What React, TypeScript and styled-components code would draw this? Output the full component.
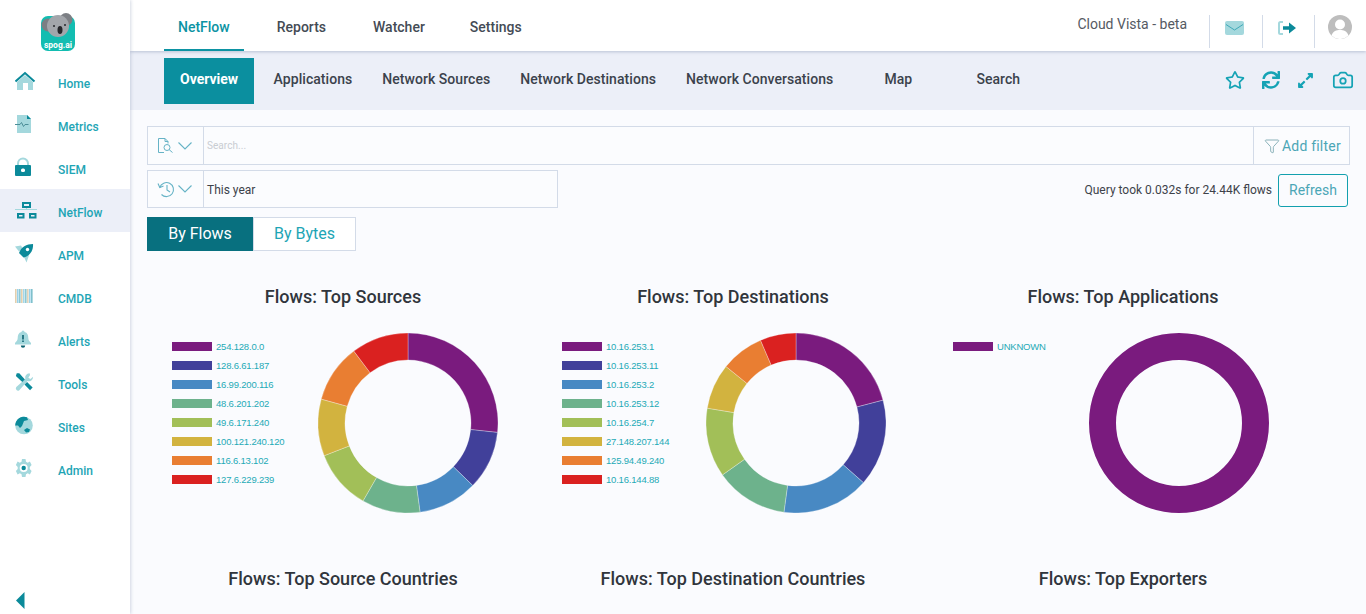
import { type FC, type ReactNode } from "react";
import styled, { createGlobalStyle } from "styled-components";
import { FaExpandAlt, FaRegStar, FaSync } from "react-icons/fa";
import { Camera, Funnel } from "lucide-react";

const DARK = "#0b8a9a";
const LIGHT = "#a4d8dd";
const TEAL_TEXT = "#1ea5b5";
const LINE = "#d3dbe8";
const COLORS = ["#7a1b7e", "#41409a", "#4889c3", "#6db28c", "#a2bf58", "#d2b33f", "#e97e32", "#da2120"];

const GlobalStyle = createGlobalStyle`
  html, body { margin: 0; height: 100%; overflow: hidden; }
  body { font-family: Roboto, "Liberation Sans", sans-serif; background: #fafbfe; }
  #root { height: 100%; }
`;

const Shell = styled.div`
  display: flex;
  height: 614px;
  overflow: hidden;
`;

const Sidebar = styled.aside`
  width: 130px;
  flex: none;
  background: #fff;
  box-shadow: 1px 0 3px rgba(120, 135, 170, 0.3);
  display: flex;
  flex-direction: column;
  position: relative;
  z-index: 3;
`;

const LogoBox = styled.div`
  height: 60px;
  padding: 12px 0 0 40px;
  box-sizing: border-box;
`;

const SideItem = styled.a<{ $active?: boolean }>`
  height: 43px;
  display: flex;
  padding-left: 15px;
  background: ${({ $active }) => ($active ? "#eceff8" : "transparent")};
`;

const SideIcon = styled.span`
  width: 22px;
  height: 22px;
  margin-top: 11px;
  margin-right: 21px;
  flex: none;
`;

const SideLabel = styled.span`
  font-size: 12px;
  font-weight: 500;
  color: ${TEAL_TEXT};
  margin-top: 17px;
  line-height: 14px;
`;

const Collapse = styled.div`
  margin-top: auto;
  padding: 0 0 5px 16px;
  height: 17px;
`;

const Main = styled.main`
  flex: 1;
  min-width: 0;
  display: flex;
  flex-direction: column;
`;

const TopBar = styled.header`
  height: 51px;
  flex: none;
  background: #fff;
  display: flex;
  padding-left: 34px;
  box-shadow: 0 1px 3px rgba(110, 125, 160, 0.4);
  position: relative;
  z-index: 2;
`;

const TopTab = styled.a<{ $active?: boolean }>`
  height: 51px;
  box-sizing: border-box;
  padding: 19px 14px 0;
  margin-right: 19px;
  font-size: 14px;
  line-height: 16px;
  font-weight: 500;
  color: ${({ $active }) => ($active ? "#0c93a3" : "#444b55")};
  border-bottom: 2px solid ${({ $active }) => ($active ? "#0c93a3" : "transparent")};

  &:nth-child(3) {
    margin-right: 17px;
  }
`;

const TopRight = styled.div`
  margin-left: auto;
  display: flex;
  align-items: flex-start;
`;

const Beta = styled.span`
  font-size: 14px;
  line-height: 16px;
  color: #555a63;
  margin: 16px 22px 0 0;
`;

const TopCell = styled.div<{ $width: number; $left: number; $top: number }>`
  width: ${({ $width }) => $width}px;
  height: 33px;
  margin-top: 15px;
  box-sizing: border-box;
  border-left: 1px solid ${LINE};
  padding: ${({ $top, $left }) => `${$top}px 0 0 ${$left}px`};
`;

const SubBar = styled.nav`
  height: 59px;
  flex: none;
  background: #eceff8;
  display: flex;
  padding: 7px 13px 0 34px;
  box-sizing: border-box;
`;

const SubTab = styled.a<{ $active?: boolean; $wide?: boolean }>`
  height: 46px;
  box-sizing: border-box;
  padding: 13px ${({ $active }) => ($active ? 16 : 15)}px 0;
  margin-right: ${({ $active }) => ($active ? 4.5 : 0)}px;
  min-width: ${({ $wide }) => ($wide ? 100 : 0)}px;
  text-align: center;
  font-size: 14px;
  line-height: 16px;
  letter-spacing: ${({ $active }) => ($active ? 0 : 0.05)}px;
  font-weight: ${({ $active }) => ($active ? 700 : 500)};
  color: ${({ $active }) => ($active ? "#fff" : "#3b424c")};
  background: ${({ $active }) => ($active ? "#0b8f9f" : "transparent")};
`;

const SubActions = styled.div`
  margin-left: auto;
  display: flex;
  gap: 17px;
  height: 20px;
  margin-top: 12px;
  color: #15a3b5;
  align-items: center;
`;

const CameraIcon = styled(Camera)`
  margin: 0 -1px 0 1px;
`;

const Content = styled.section`
  flex: 1;
  min-height: 0;
  padding: 16px 16px 0 17px;
  background: #fafbfe;
`;

const FilterRow = styled.div<{ $width?: number; $height: number }>`
  width: ${({ $width }) => ($width ? `${$width}px` : "100%")};
  height: ${({ $height }) => $height}px;
  box-sizing: border-box;
  border: 1px solid ${LINE};
  display: flex;
  align-items: center;
  background: #fbfcfe;
`;

const PickerCell = styled.div`
  width: 56px;
  height: 100%;
  flex: none;
  box-sizing: border-box;
  border-right: 1px solid ${LINE};
  display: flex;
  align-items: center;
  padding-left: 9px;
  gap: 3px;
  color: #66b3c6;
`;

const Placeholder = styled.span`
  font-size: 10px;
  letter-spacing: 0.05px;
  color: #c9ccd2;
  padding-left: 3px;
`;

const RangeText = styled.span`
  font-size: 12px;
  color: #3d424a;
  padding: 1px 0 0 3px;
`;

const AddFilter = styled.div`
  margin-left: auto;
  width: 96px;
  height: 100%;
  box-sizing: border-box;
  border-left: 1px solid ${LINE};
  display: flex;
  align-items: center;
  padding-left: 10px;
  gap: 2px;
  font-size: 14px;
  letter-spacing: 0.2px;
  color: #4ba6b6;
`;

const QueryRow = styled.div`
  display: flex;
  align-items: center;
  margin-top: 5px;
`;

const QueryInfo = styled.div`
  margin-left: auto;
  display: flex;
  align-items: center;
  gap: 6px;
  padding: 2px 2px 0 0;
  font-size: 12px;
  color: #3d424a;
`;

const RefreshButton = styled.button`
  width: 70px;
  height: 33px;
  border: 1px solid #13a0ae;
  border-radius: 3px;
  background: transparent;
  font: 400 14px Roboto, sans-serif;
  color: #4ba6b6;
  padding: 0;
`;

const Toggle = styled.div`
  display: flex;
  margin-top: 9px;
`;

const ToggleButton = styled.div<{ $active?: boolean }>`
  width: ${({ $active }) => ($active ? 106 : 103)}px;
  height: 34px;
  box-sizing: border-box;
  display: flex;
  align-items: center;
  justify-content: center;
  padding-bottom: 2px;
  font-size: 16px;
  color: ${({ $active }) => ($active ? "#fff" : "#1ea5b5")};
  background: ${({ $active }) => ($active ? "#08707f" : "#fff")};
  border: 1px solid ${({ $active }) => ($active ? "#08707f" : LINE)};
`;

const ChartGrid = styled.div`
  display: grid;
  grid-template-columns: repeat(3, 390px);
  margin-top: 35px;
  margin-left: 1px;
`;

const ChartCell = styled.div`
  display: flex;
  flex-direction: column;
`;

const ChartTitle = styled.h3`
  margin: 0;
  font-size: 18px;
  line-height: 21px;
  font-weight: 500;
  color: #30353c;
  text-align: center;
`;

const ChartBody = styled.div<{ $inset: number }>`
  display: flex;
  height: 180px;
  margin-top: 26px;
  padding: 0 6px 0 ${({ $inset }) => $inset}px;
  margin-bottom: 55px;
`;

const Legend = styled.ul`
  list-style: none;
  margin: 8px 0 0;
  padding: 0;
  display: flex;
  flex-direction: column;
  gap: 8px;
`;

const LegendRow = styled.li`
  display: flex;
  align-items: center;
  height: 11px;
  gap: 4px;
  font-family: "Liberation Sans", Arial, sans-serif;
  font-size: 9.5px;
  letter-spacing: -0.2px;
  color: #1eaab6;
`;

const Swatch = styled.i<{ $color: string }>`
  width: 40px;
  height: 9px;
  background: ${({ $color }) => $color};
`;

const DonutBox = styled.div`
  flex: 1;
  display: flex;
  justify-content: center;
`;

const Donut: FC<{ stops: number[] }> = ({ stops }) => {
  const point = (deg: number, r: number) => {
    const a = (deg * Math.PI) / 180;
    return `${(90 + r * Math.sin(a)).toFixed(2)} ${(90 - r * Math.cos(a)).toFixed(2)}`;
  };
  return (
    <svg width="180" height="180" viewBox="0 0 180 180">
      {stops.length === 1 ? (
        <circle cx="90" cy="90" r="76.5" fill="none" stroke={COLORS[0]} strokeWidth="27" />
      ) : (
        stops.map((end, i) => {
          const start = i === 0 ? 0 : stops[i - 1];
          const large = end - start > 180 ? 1 : 0;
          const d = `M${point(start, 90)} A90 90 0 ${large} 1 ${point(end, 90)} L${point(end, 63)} A63 63 0 ${large} 0 ${point(start, 63)}Z`;
          return <path key={end} d={d} fill={COLORS[i]} stroke="#fafbfe" strokeWidth="0.3" />;
        })
      )}
    </svg>
  );
};

const Glyph: FC<{ children: ReactNode }> = ({ children }) => (
  <svg width="22" height="22" viewBox="0 0 22 22">
    {children}
  </svg>
);

const Chevron = () => (
  <svg width="14" height="8" viewBox="0 0 14 8" fill="none" stroke="currentColor" strokeWidth="1.100">
    <path d="M0.500 0.500 7 7 13.500 0.500" />
  </svg>
);

const CMDB_STRIPES = ["#e2cfae", "#9ad2ea", "#8fc7d0", "#e2cfae", "#a4d8ea", "#8fc7d0", "#e2d3b8", "#9ad2ea", "#7fc0cc"];

const icons: Record<string, ReactNode> = {
  Home: (
    <Glyph>
      <path d="M2 11 10 4l8 7v8h-5v-7H8v7H2z" fill={LIGHT} />
      <path d="M0.500 10.500 10 2l9.500 8.500" fill="none" stroke={DARK} strokeWidth="2" />
    </Glyph>
  ),
  Metrics: (
    <Glyph>
      <path d="M2 1h10l4 4v14H2z" fill={LIGHT} />
      <path d="M12 1l4 4h-4z" fill={DARK} />
      <path d="M0 10.500h5l1.500-2 2 4 1.500-2h3.500" fill="none" stroke="#4b8e98" strokeWidth="1" />
    </Glyph>
  ),
  SIEM: (
    <Glyph>
      <path d="M3 9V6.500a5 5 0 0 1 10 0V9" fill="none" stroke={LIGHT} strokeWidth="2" />
      <path d="M1 8h14a1 1 0 0 1 1 1v9a1 1 0 0 1-1 1H1a1 1 0 0 1-1-1V9a1 1 0 0 1 1-1z" fill={DARK} />
      <rect x="6" y="11.500" width="4" height="3.500" rx="1.500" fill="#fff" />
    </Glyph>
  ),
  NetFlow: (
    <Glyph>
      <path d="M0 9.500h22M11.500 8v2" stroke={LIGHT} strokeWidth="1.200" />
      <path d="M8 3h7v4H8zM3 14h5.500v3.500H3zM15 14h5.500v3.500H15z" fill="none" stroke={DARK} strokeWidth="2" />
    </Glyph>
  ),
  APM: (
    <Glyph>
      <path d="M0 3.500 6 2.500 7.500 5 4 8.500zM9 14l3-3 2 1.500L11.500 19.500z" fill={LIGHT} />
      <path d="M4 10C6 4 11.500 1 18 1c.5 6-3 12-9.500 13.500z" fill={DARK} />
      <circle cx="12.500" cy="6.500" r="1.700" fill="#fff" />
    </Glyph>
  ),
  CMDB: (
    <Glyph>
      {CMDB_STRIPES.map((color, i) => (
        <rect key={i} x={i * 2} y="3" width="1.600" height="14" fill={color} />
      ))}
    </Glyph>
  ),
  Alerts: (
    <Glyph>
      <path d="M6.500 3a1.500 1.500 0 0 1 3 0c3 .8 3.800 3 3.800 6 0 2 1.200 3.500 2.700 5v1.500H0V14c1.500-1.500 2.700-3 2.700-5 0-3 .8-5.200 3.800-6z" fill={LIGHT} />
      <path d="M7.200 6h1.600v4.500H7.200zM7.200 11.500h1.600v1.500H7.200zM5.800 16.500h4.400A2.200 2.200 0 0 1 5.800 16.500z" fill="#0a6270" />
    </Glyph>
  ),
  Tools: (
    <Glyph>
      <g transform="translate(0 0.500) scale(0.86)">
        <path d="M14 11 20.500 17.500 17.500 20.500 11 14z" fill={DARK} />
        <path d="M17 1a5 5 0 0 0-5 6.500L1.500 17a2.500 2.500 0 0 0 3.500 3.500L14.500 10a5 5 0 0 0 6.500-5l-3 2.500L15.500 6 17.500 3z" fill={LIGHT} />
        <path d="M2 1 5 1 11.500 8 8.500 11 1 4z" fill={DARK} />
      </g>
    </Glyph>
  ),
  Sites: (
    <Glyph>
      <circle cx="9" cy="10.500" r="8.800" fill={LIGHT} />
      <path d="M0.200 10.500A8.800 8.800 0 0 1 12 2.200l1 2.800-4 1-2 5-2 2-2-2.500z" fill={DARK} />
      <path d="M9 15l3-2 3 1.500-1 2.500-3 .5z" fill={DARK} />
    </Glyph>
  ),
  Admin: (
    <Glyph>
      <g transform="translate(0.500 1)">
        <path d="M6.500 0h3.500l.5 2.300 1.700.8 2.200-1 1.700 3-1.800 1.500v1.800l1.800 1.500-1.700 3-2.200-1-1.700.8L10 15H6.500L6 12.700l-1.700-.8-2.200 1-1.700-3L2.200 8.400V6.600L.400 5.100l1.700-3 2.200 1L6 2.300z" fill={LIGHT} transform="scale(1 1.200)" />
        <circle cx="8.200" cy="9" r="4" fill="#fff" />
        <circle cx="8.200" cy="9" r="2.200" fill={DARK} />
      </g>
    </Glyph>
  ),
};

const KoalaLogo = () => (
  <svg width="36" height="40" viewBox="0 0 36 40">
    <rect x="1" y="4" width="34" height="35" rx="7" fill="#13bdb1" />
    <circle cx="8" cy="13" r="6.500" fill="#7c7f84" />
    <circle cx="26" cy="7.500" r="6.500" fill="#7c7f84" />
    <ellipse cx="18" cy="14" rx="11" ry="11" fill="#a3a6ab" />
    <ellipse cx="20" cy="18" rx="2.500" ry="4" fill="#26272b" />
    <circle cx="14" cy="14" r="1" fill="#26272b" />
    <circle cx="25" cy="13" r="1" fill="#26272b" />
    <text x="18" y="36" textAnchor="middle" fontFamily="Roboto, sans-serif" fontSize="8.500" fontWeight="700" fill="#fff">
      spog.ai
    </text>
  </svg>
);

const SIDE_ITEMS = ["Home", "Metrics", "SIEM", "NetFlow", "APM", "CMDB", "Alerts", "Tools", "Sites", "Admin"];
const SUB_TABS = ["Applications", "Network Sources", "Network Destinations", "Network Conversations"];

const TOP_ROW = [
  {
    title: "Flows: Top Sources",
    inset: 24,
    stops: [96, 134, 172.3, 210, 248.7, 285.4, 323, 360],
    legend: ["254.128.0.0", "128.6.61.187", "16.99.200.116", "48.6.201.202", "49.6.171.240", "100.121.240.120", "116.6.13.102", "127.6.229.239"],
  },
  {
    title: "Flows: Top Destinations",
    inset: 24,
    stops: [75.3, 131.5, 187.7, 234.8, 279.5, 308.9, 336.8, 360],
    legend: ["10.16.253.1", "10.16.253.11", "10.16.253.2", "10.16.253.12", "10.16.254.7", "27.148.207.144", "125.94.49.240", "10.16.144.88"],
  },
  { title: "Flows: Top Applications", inset: 25, stops: [360], legend: ["UNKNOWN"] },
];

const BOTTOM_ROW = ["Flows: Top Source Countries", "Flows: Top Destination Countries", "Flows: Top Exporters"];

export default function App() {
  return (
    <Shell>
      <GlobalStyle />
      <Sidebar>
        <LogoBox>
          <KoalaLogo />
        </LogoBox>
        {SIDE_ITEMS.map((name) => (
          <SideItem key={name} $active={name === "NetFlow"}>
            <SideIcon>{icons[name]}</SideIcon>
            <SideLabel>{name}</SideLabel>
          </SideItem>
        ))}
        <Collapse>
          <svg width="9" height="17" viewBox="0 0 9 17">
            <path d="M8.500 0v17L0 8.500z" fill={DARK} />
          </svg>
        </Collapse>
      </Sidebar>
      <Main>
        <TopBar>
          <TopTab $active>NetFlow</TopTab>
          <TopTab>Reports</TopTab>
          <TopTab>Watcher</TopTab>
          <TopTab>Settings</TopTab>
          <TopRight>
            <Beta>Cloud Vista - beta</Beta>
            <TopCell $width={53} $left={15} $top={5}>
              <svg width="19" height="14" viewBox="0 0 19 14">
                <rect width="19" height="14" rx="2" fill={LIGHT} />
                <path d="M1 3.500 9.500 9 18 3.500" fill="none" stroke="#3fa9b8" strokeWidth="1" />
              </svg>
            </TopCell>
            <TopCell $width={52} $left={15} $top={5}>
              <svg width="18" height="14" viewBox="0 0 18 14">
                <path d="M5 1H2.500A1.500 1.500 0 0 0 1 2.500v9A1.500 1.500 0 0 0 2.500 13H5" fill="none" stroke={LIGHT} strokeWidth="2" />
                <path d="M5 5.200h6V1.500L18 7l-7 5.500V8.800H5z" fill={DARK} />
              </svg>
            </TopCell>
            <TopCell $width={52} $left={13} $top={0}>
              <svg width="24" height="24" viewBox="0 0 24 24">
                <circle cx="12" cy="12" r="12" fill="#bdbdbd" />
                <circle cx="12" cy="9.500" r="5" fill="#fff" />
                <path d="M3.500 20.500C5 16 8.500 15 12 15s7 1 8.500 5.500A12 12 0 0 1 3.500 20.500z" fill="#fff" />
              </svg>
            </TopCell>
          </TopRight>
        </TopBar>
        <SubBar>
          <SubTab $active>Overview</SubTab>
          {SUB_TABS.map((tab) => (
            <SubTab key={tab}>{tab}</SubTab>
          ))}
          <SubTab $wide>Map</SubTab>
          <SubTab $wide>Search</SubTab>
          <SubActions>
            <FaRegStar size={20} />
            <FaSync size={18} />
            <FaExpandAlt size={17} />
            <CameraIcon size={22} strokeWidth={1.9} />
          </SubActions>
        </SubBar>
        <Content>
          <FilterRow $height={39}>
            <PickerCell>
              <svg width="18" height="18" viewBox="0 0 18 18" fill="none" stroke="currentColor" strokeWidth="1">
                <path d="M7 15.500H1.500v-14H8l3 3v2" />
                <path d="M8 1.500v3h3" />
                <circle cx="10" cy="10.500" r="3" />
                <path d="M12.200 12.700 15.500 15.500" />
              </svg>
              <Chevron />
            </PickerCell>
            <Placeholder>Search...</Placeholder>
            <AddFilter>
              <Funnel size={16} strokeWidth={1.2} color="#6f9fa8" />
              Add filter
            </AddFilter>
          </FilterRow>
          <QueryRow>
            <FilterRow $width={411} $height={38}>
              <PickerCell>
                <svg width="18" height="18" viewBox="0 0 18 18" fill="none" stroke="currentColor" strokeWidth="1.100">
                  <path d="M2.800 7.500A7 7 0 1 1 4.500 14.500" />
                  <path d="M1 3.500 2.800 7.500 6.500 6" />
                  <path d="M10 5v5l3 2" />
                </svg>
                <Chevron />
              </PickerCell>
              <RangeText>This year</RangeText>
            </FilterRow>
            <QueryInfo>
              Query took 0.032s for 24.44K flows
              <RefreshButton>Refresh</RefreshButton>
            </QueryInfo>
          </QueryRow>
          <Toggle>
            <ToggleButton $active>By Flows</ToggleButton>
            <ToggleButton>By Bytes</ToggleButton>
          </Toggle>
          <ChartGrid>
            {TOP_ROW.map((chart) => (
              <ChartCell key={chart.title}>
                <ChartTitle>{chart.title}</ChartTitle>
                <ChartBody $inset={chart.inset}>
                  <Legend>
                    {chart.legend.map((label, i) => (
                      <LegendRow key={label}>
                        <Swatch $color={COLORS[i]} />
                        {label}
                      </LegendRow>
                    ))}
                  </Legend>
                  <DonutBox>
                    <Donut stops={chart.stops} />
                  </DonutBox>
                </ChartBody>
              </ChartCell>
            ))}
            {BOTTOM_ROW.map((title) => (
              <ChartTitle key={title}>{title}</ChartTitle>
            ))}
          </ChartGrid>
        </Content>
      </Main>
    </Shell>
  );
}
